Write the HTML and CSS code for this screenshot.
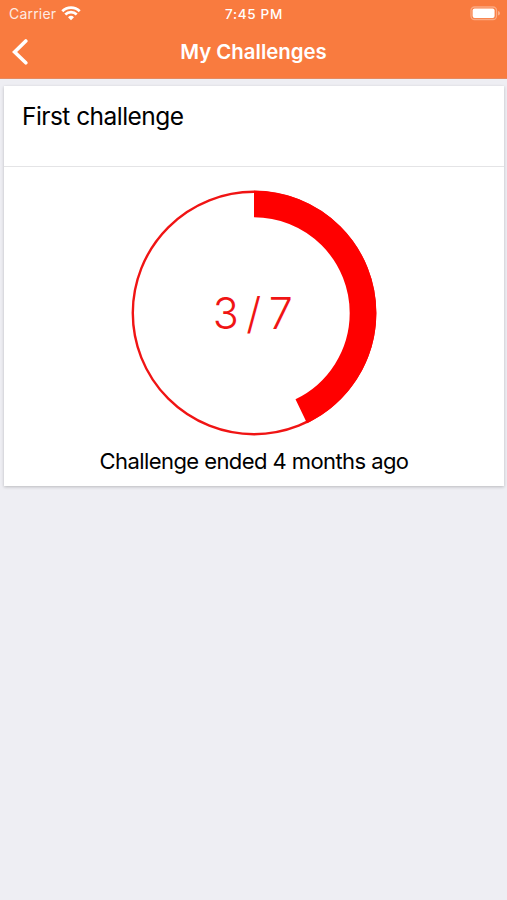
FILE: index.html
```
<!DOCTYPE html>
<html lang="en">
<head>
  <meta charset="UTF-8" />
  <meta name="viewport" content="width=device-width, initial-scale=1.0"/>
  <title>My Challenges</title>
  <link rel="stylesheet" href="styles.css">
</head>
<body>
  <header>
    <div class="status-bar">
      <div class="carrier">
        <span class="carrier-name">Carrier</span>
        <svg class="wifi" width="20" height="15" viewBox="0 0 20 15" fill="none" stroke="#fff" stroke-width="2.7">
          <path d="M1.3 5.3a12.3 12.3 0 0 1 17.4 0" />
          <path d="M4.3 8.5a8.1 8.1 0 0 1 11.4 0" />
          <path d="M10 14.2l-3-3a4.3 4.3 0 0 1 6 0z" fill="#fff" stroke="none" />
        </svg>
      </div>
      <span class="time">7:45 PM</span>
      <svg class="battery" width="31" height="15" viewBox="0 0 31 15">
        <rect x="1" y="1" width="25.5" height="12.5" rx="3.5" fill="none" stroke="#fff" stroke-opacity="0.35" stroke-width="1.3" />
        <rect x="2.6" y="2.6" width="22" height="9.4" rx="2" fill="#fff" />
        <path d="M28 5v4.5q2-.6 2-2.25t-2-2.25z" fill="#fff" fill-opacity="0.4" />
      </svg>
    </div>
    <nav class="nav-bar">
      <svg class="back" width="18" height="28" viewBox="0 0 18 28" fill="none" stroke="#fff" stroke-width="3.6" stroke-linecap="round">
        <path d="M15.8 3L4.6 14l11.2 10.8" />
      </svg>
      <h1>My Challenges</h1>
    </nav>
  </header>

  <main class="card">
    <h2>First challenge</h2>
    <div class="card-body">
      <svg class="progress" width="246" height="246" viewBox="0 0 246 246">
        <circle class="track" cx="123" cy="123" r="121.2" />
        <circle class="arc" cx="123" cy="123" r="109" pathLength="7" stroke-dasharray="3 7" transform="rotate(-90 123 123)" />
        <text class="count" x="121.8" y="138.5" text-anchor="middle">3 / 7</text>
      </svg>
      <p class="ended">Challenge ended 4 months ago</p>
    </div>
  </main>
</body>
</html>
```
FILE: styles.css
```
body {
  font-family: Inter, "Liberation Sans", sans-serif;
  margin: 0;
  min-height: 100vh;
  background-color: #eeeef3;
  color: #000;
}

header {
  box-sizing: border-box;
  height: 79px;
  background-color: #f97b3f;
  border-bottom: 1px solid #e58a61;
  color: #fff;
}

.status-bar {
  display: grid;
  grid-template-columns: 1fr auto 1fr;
  align-items: center;
  height: 27px;
  padding: 0 6px 0 9px;
}

.carrier {
  display: flex;
  align-items: center;
  gap: 5px;
}

.carrier-name {
  font-size: 14px;
  letter-spacing: 0.2px;
  opacity: 0.85;
}

.time {
  margin-left: -2px;
  font-size: 13.5px;
  font-weight: 500;
  letter-spacing: 0.7px;
}

.battery {
  justify-self: end;
}

.nav-bar {
  display: grid;
  grid-template-columns: 18px 1fr 18px;
  align-items: center;
  height: 50px;
  padding: 0 10px;
}

h1 {
  margin: 0;
  padding-bottom: 2px;
  font-size: 20.4px;
  font-weight: 600;
  text-align: center;
}

.card {
  margin: 7px 3px 0 4px;
  background-color: #fff;
  box-shadow: 0 1px 3px rgba(0, 0, 0, 0.22);
}

h2 {
  box-sizing: border-box;
  height: 81px;
  margin: 0;
  padding: 15px 18px;
  border-bottom: 1px solid #e4e4e6;
  font-size: 24.5px;
  line-height: 30px;
  font-weight: 400;
  letter-spacing: -0.55px;
}

.card-body {
  display: flex;
  flex-direction: column;
  align-items: center;
  height: 296px;
  padding-top: 23px;
}

.track {
  fill: none;
  stroke: #f01414;
  stroke-width: 2.4;
}

.arc {
  fill: none;
  stroke: #f00;
  stroke-width: 26.6;
}

.count {
  font-size: 43px;
  font-weight: 300;
  word-spacing: -4.5px;
  fill: #f01414;
}

.ended {
  margin: 11px 0 0;
  font-size: 22px;
  line-height: 28px;
  letter-spacing: -0.58px;
}
```
